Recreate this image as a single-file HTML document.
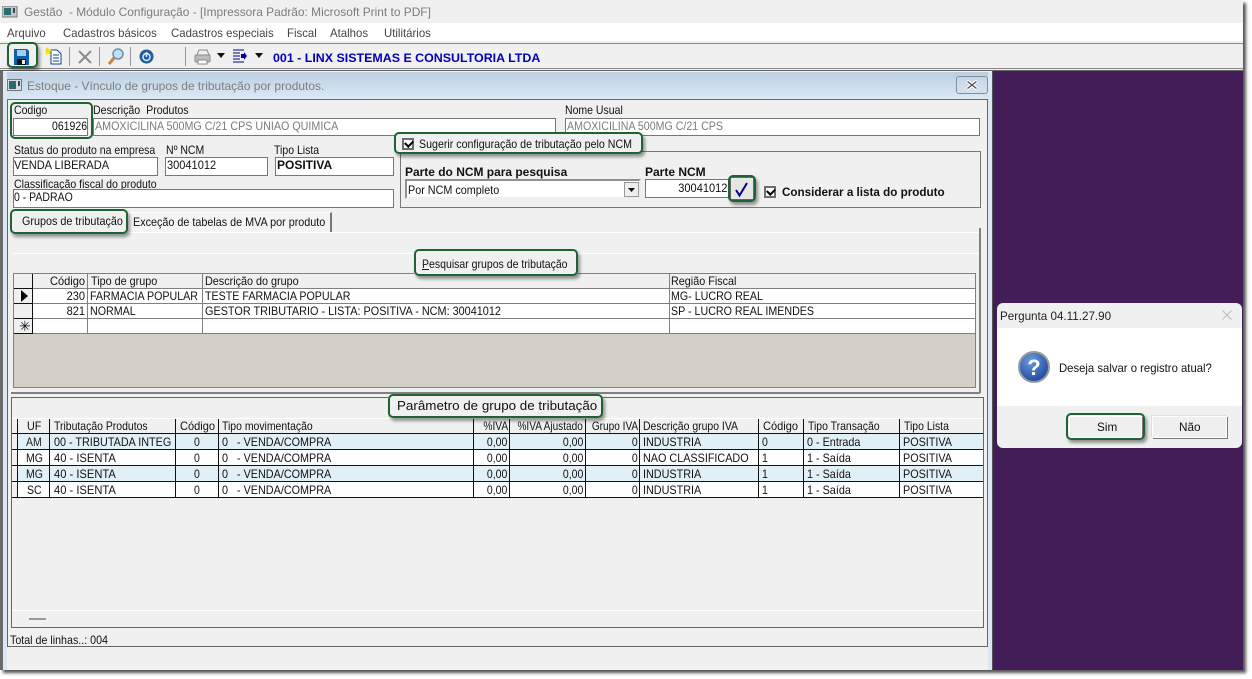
<!DOCTYPE html>
<html><head><meta charset="utf-8"><style>
html,body{margin:0;padding:0;width:1252px;height:679px;overflow:hidden;background:#fff}
*{box-sizing:border-box}
#a{position:absolute;left:0;top:0;width:1252px;height:679px;font:12px/14px "Liberation Sans",sans-serif;color:#111;overflow:hidden}
.b{position:absolute}
.t{position:absolute;white-space:pre;transform-origin:0 50%;transform:scaleX(.875);height:14px}
.r{position:absolute;white-space:pre;transform-origin:100% 50%;transform:scaleX(.875);height:14px;text-align:right}
.f{position:absolute;background:#fff;border:1px solid #777}
.g{position:absolute;border:2px solid #1d6333;border-radius:5px;box-shadow:2px 3px 3px rgba(0,0,0,.4)}
.s{position:absolute;width:1px;background:#999}
.h{position:absolute;background:#808080}
.k{position:absolute;background:#111}
.d{color:#7c7c7c}
.c{position:absolute;width:12px;height:12px;background:#fff;border:2px solid #6d6d6d}
.c:after{content:"";position:absolute;left:1px;top:0;width:6px;height:4px;border-left:2px solid #000;border-bottom:2px solid #000;transform:rotate(-45deg) translate(0,0)}
</style></head><body><div id="a">
<div class="b" style="left:0;top:0;width:1243px;height:670px;background:#f0f0f0;box-shadow:3px 3px 3px #555"></div>
<div class="b" style="left:0;top:23px;width:1243px;height:18px;background:#fff"></div>
<div class="b" style="left:0;top:43px;width:1243px;height:1px;background:#8a8a8a"></div>
<div class="b" style="left:0;top:68px;width:1243px;height:1px;background:#8a8a8a"></div>
<div class="b" style="left:0;top:70px;width:1243px;height:1px;background:#666"></div>
<div class="b" style="left:993px;top:71px;width:250px;height:599px;background:#421d58"></div>
<div class="b" style="left:0;top:71px;width:3px;height:599px;background:#6a6a6a"></div>

<svg class="b" style="left:2px;top:6px" width="16" height="12"><rect width="15" height="11" fill="#bcc6cc" stroke="#777"/><rect x="2" y="2" width="7" height="7" fill="#2d6a72"/><rect x="11" y="2" width="2" height="5" fill="#445"/></svg>
<span class="t d" style="left:24px;top:5px;transform:scaleX(.992)">Gestão  - Módulo Configuração - [Impressora Padrão: Microsoft Print to PDF]</span>
<span class="t" style="left:7px;top:26px;color:#444;transform:scaleX(.95)">Arquivo</span>
<span class="t" style="left:63px;top:26px;color:#444;transform:scaleX(.95)">Cadastros básicos</span>
<span class="t" style="left:171px;top:26px;color:#444;transform:scaleX(.95)">Cadastros especiais</span>
<span class="t" style="left:287px;top:26px;color:#444;transform:scaleX(.95)">Fiscal</span>
<span class="t" style="left:330px;top:26px;color:#444;transform:scaleX(.95)">Atalhos</span>
<span class="t" style="left:384px;top:26px;color:#444;transform:scaleX(.95)">Utilitários</span>

<div class="s" style="left:7px;top:46px;height:20px"></div>
<svg class="b" style="left:14px;top:49px" width="15" height="16"><path d="M0 0H13L15 2V16H0Z" fill="#0f5ea8"/><rect x="3" y="1" width="9" height="6" fill="#9fd0ee"/><rect x="3" y="10" width="9" height="6" fill="#111"/><rect x="8" y="11" width="3" height="4" fill="#eee"/></svg>
<svg class="b" style="left:45px;top:47px" width="17" height="18"><path d="M6 3H12L16 7V17H6Z" fill="#fff" stroke="#0b3f8f"/><path d="M8 8H14M8 11H14M8 14H14" stroke="#0b3f8f"/><path d="M3 0L4 3L7 3L5 5L6 8L3 6L1 8L1 5L0 3Z" fill="#f4e000"/></svg>
<div class="s" style="left:69px;top:47px;height:19px"></div>
<svg class="b" style="left:78px;top:50px" width="14" height="14"><path d="M1 1L13 13M13 1L1 13" stroke="#8b8b8b" stroke-width="2"/></svg>
<div class="s" style="left:99px;top:47px;height:19px"></div>
<svg class="b" style="left:107px;top:48px" width="17" height="18"><circle cx="11" cy="6" r="5" fill="#bfe2f6" stroke="#6a91ad" stroke-width="1.5"/><path d="M7 10L2 16" stroke="#c9853f" stroke-width="3"/></svg>
<div class="s" style="left:130px;top:47px;height:19px"></div>
<svg class="b" style="left:139px;top:49px" width="15" height="15"><circle cx="7.5" cy="7.5" r="7" fill="#1f5f9f"/><circle cx="7.5" cy="8" r="3.5" fill="none" stroke="#dcecf8" stroke-width="1.5"/><path d="M7.5 3V8" stroke="#dcecf8" stroke-width="1.5"/></svg>
<div class="s" style="left:185px;top:47px;height:19px"></div>
<svg class="b" style="left:194px;top:49px" width="17" height="16"><path d="M5 1H13L15 6H3Z" fill="#eee" stroke="#888"/><rect x="1" y="6" width="15" height="7" rx="1" fill="#bbb" stroke="#888"/><rect x="4" y="11" width="9" height="4" fill="#fff" stroke="#888"/></svg>
<svg class="b" style="left:217px;top:53px" width="8" height="5"><path d="M0 0H8L4 5Z" fill="#111"/></svg>
<svg class="b" style="left:233px;top:49px" width="14" height="15"><path d="M0 1H11M0 4H7M0 7H7M0 10H7M0 13H11" stroke="#0000a0" stroke-width="1"/><path d="M8 5H11V3L14 7L11 11V9H8Z" fill="#0000a0"/></svg>
<svg class="b" style="left:255px;top:53px" width="8" height="5"><path d="M0 0H8L4 5Z" fill="#111"/></svg>
<span class="t" style="left:273px;top:51px;font-weight:bold;color:#0000b8;transform:scaleX(1.035)">001 - LINX SISTEMAS E CONSULTORIA LTDA</span>
<div class="g" style="left:7px;top:42px;width:31px;height:26px"></div>

<!-- inner window -->
<div class="b" style="left:3px;top:71px;width:989px;height:599px;background:#f0f0f0;border-left:1px solid #dfe9f2"></div>
<div class="b" style="left:3px;top:72px;width:989px;height:27px;background:linear-gradient(#bccfe0,#dbe9f5)"></div>
<div class="b" style="left:988px;top:72px;width:4px;height:598px;background:#dbe8f3"></div>
<div class="b" style="left:3px;top:72px;width:4px;height:598px;background:#dbe8f3"></div>
<div class="b" style="left:992px;top:71px;width:1px;height:599px;background:#555"></div>
<svg class="b" style="left:7px;top:79px" width="15" height="12"><rect x=".5" y=".5" width="14" height="11" fill="#d5dde3" stroke="#777"/><rect x="2" y="2" width="7" height="8" fill="#2d6a72"/><rect x="11" y="2" width="2" height="5" fill="#445"/></svg>
<span class="t d" style="left:27px;top:79px;transform:scaleX(.997)">Estoque - Vínculo de grupos de tributação por produtos.</span>
<div class="b" style="left:956px;top:76px;width:32px;height:18px;border:1px solid #7d8ea1;border-radius:3px;background:linear-gradient(#c5d5e4,#d5e2ee)"></div>
<svg class="b" style="left:966px;top:80px" width="12" height="10"><path d="M1 1L11 9M11 1L1 9" stroke="#fff" stroke-width="3.4"/><path d="M1.5 1.5L10.5 8.5M10.5 1.5L1.5 8.5" stroke="#555" stroke-width="1.4"/></svg>

<!-- content -->
<div class="b" style="left:7px;top:99px;width:981px;height:548px;border:1px solid #666;background:#f0f0f0"></div>
<span class="t" style="left:14px;top:103px">Codigo</span>
<div class="f" style="left:13px;top:118px;width:75px;height:18px"></div>
<span class="r" style="right:1165px;top:119px">061926</span>
<span class="t" style="left:93px;top:103px;transform:scaleX(.885)">Descrição  Produtos</span>
<div class="f" style="left:93px;top:118px;width:463px;height:18px"></div>
<span class="t d" style="left:95px;top:119px;transform:scaleX(.894)">AMOXICILINA 500MG C/21 CPS UNIAO QUIMICA</span>
<span class="t" style="left:565px;top:103px">Nome Usual</span>
<div class="f" style="left:565px;top:118px;width:415px;height:18px"></div>
<span class="t d" style="left:567px;top:119px;transform:scaleX(.886)">AMOXICILINA 500MG C/21 CPS</span>

<span class="t" style="left:14px;top:143px;transform:scaleX(.875)">Status do produto na empresa</span>
<div class="f" style="left:13px;top:157px;width:145px;height:19px"></div>
<span class="t" style="left:14px;top:158px;transform:scaleX(.92)">VENDA LIBERADA</span>
<span class="t" style="left:166px;top:143px">Nº NCM</span>
<div class="f" style="left:165px;top:157px;width:103px;height:19px"></div>
<span class="t" style="left:167px;top:158px;transform:scaleX(.92)">30041012</span>
<span class="t" style="left:274px;top:143px">Tipo Lista</span>
<div class="f" style="left:275px;top:157px;width:119px;height:19px"></div>
<span class="t" style="left:277px;top:158px;font-weight:bold;transform:scaleX(1)">POSITIVA</span>
<span class="t" style="left:14px;top:177px;transform:scaleX(.88)">Classificação fiscal do produto</span>
<div class="f" style="left:13px;top:189px;width:381px;height:19px"></div>
<span class="t" style="left:14px;top:190px;transform:scaleX(.875)">0 - PADRAO</span>

<div class="b" style="left:400px;top:151px;width:581px;height:57px;border:1px solid #777"></div>
<div class="b" style="left:396px;top:134px;width:245px;height:18px;background:#f0f0f0"></div>
<div class="c" style="left:402px;top:138px"></div>
<span class="t" style="left:419px;top:137px;transform:scaleX(.887)">Sugerir configuração de tributação pelo NCM</span>
<div class="g" style="left:394px;top:132px;width:249px;height:22px"></div>
<span class="t" style="left:405px;top:165px;font-weight:bold;transform:scaleX(.997)">Parte do NCM para pesquisa</span>
<div class="b" style="left:405px;top:179px;width:236px;height:20px;background:#fff;border:2px solid #8f8f8f;border-right-color:#eee;border-bottom-color:#eee"></div>
<span class="t" style="left:408px;top:183px;transform:scaleX(.9)">Por NCM completo</span>
<div class="b" style="left:624px;top:182px;width:15px;height:15px;background:#eee;border:1px solid #999"></div>
<svg class="b" style="left:628px;top:188px" width="7" height="4"><path d="M0 0H7L3.5 4Z" fill="#111"/></svg>
<span class="t" style="left:645px;top:165px;font-weight:bold;transform:scaleX(1)">Parte NCM</span>
<div class="f" style="left:645px;top:179px;width:84px;height:19px"></div>
<span class="r" style="right:525px;top:181px;transform:scaleX(.92)">30041012</span>
<div class="b" style="left:730px;top:177px;width:24px;height:23px;background:#e6e6e6;border:1px solid #666"></div>
<svg class="b" style="left:733px;top:180px" width="18" height="18"><path d="M3 10L6.5 15.5L14 3" fill="none" stroke="#000090" stroke-width="2"/></svg>
<div class="g" style="left:728px;top:175px;width:28px;height:27px"></div>
<div class="c" style="left:764px;top:186px"></div>
<span class="t" style="left:782px;top:185px;font-weight:bold;transform:scaleX(.972)">Considerar a lista do produto</span>

<div class="g" style="left:10px;top:102px;width:83px;height:37px;box-shadow:none"></div>

<!-- tabs -->
<div class="b" style="left:128px;top:212px;width:204px;height:20px;background:#f4f4f4;border-right:2px solid #777;border-top:1px solid #fff"></div>
<span class="t" style="left:133px;top:215px;transform:scaleX(.899)">Exceção de tabelas de MVA por produto</span>
<span class="t" style="left:22px;top:214px;transform:scaleX(.9)">Grupos de tributação</span>
<div class="b" style="left:11px;top:232px;width:969px;height:1px;background:#fff"></div>
<div class="b" style="left:979px;top:228px;width:2px;height:165px;background:#808080"></div>
<div class="g" style="left:10px;top:209px;width:118px;height:25px"></div>
<div class="b" style="left:13px;top:253px;width:966px;height:1px;background:#fff"></div>

<!-- grid 1 -->
<div class="b" style="left:13px;top:273px;width:963px;height:115px;background:#d4d0c8;border:1px solid #808080"></div>
<div class="b" style="left:14px;top:274px;width:961px;height:14px;background:#f0f0f0"></div>
<div class="b" style="left:33px;top:288px;width:942px;height:45px;background:#fff"></div>
<div class="b" style="left:14px;top:288px;width:19px;height:45px;background:#f0f0f0"></div>
<div class="h" style="left:13px;top:288px;width:963px;height:1px"></div>
<div class="h" style="left:13px;top:303px;width:963px;height:1px"></div>
<div class="h" style="left:13px;top:318px;width:963px;height:1px"></div>
<div class="h" style="left:13px;top:333px;width:963px;height:1px"></div>
<div class="k" style="left:32px;top:274px;width:1px;height:59px"></div>
<div class="k" style="left:14px;top:303px;width:19px;height:1px"></div>
<div class="k" style="left:14px;top:318px;width:19px;height:1px"></div>
<div class="k" style="left:14px;top:333px;width:19px;height:1px"></div>
<div class="k" style="left:14px;top:288px;width:19px;height:1px"></div>
<div class="h" style="left:87px;top:274px;width:1px;height:59px"></div>
<div class="h" style="left:202px;top:274px;width:1px;height:59px"></div>
<div class="h" style="left:669px;top:274px;width:1px;height:59px"></div>
<svg class="b" style="left:21px;top:290px" width="7" height="12"><path d="M0 0L7 6L0 12Z" fill="#000"/></svg>
<span class="t" style="left:19px;top:319px;font-size:14px;transform:none">✳</span>
<span class="r" style="right:1167px;top:274px;transform:scaleX(.92)">Código</span>
<span class="t" style="left:91px;top:274px;transform:scaleX(.9)">Tipo de grupo</span>
<span class="t" style="left:205px;top:274px;transform:scaleX(.9)">Descrição do grupo</span>
<span class="t" style="left:671px;top:274px;transform:scaleX(.9)">Região Fiscal</span>
<span class="r" style="right:1167px;top:289px;transform:scaleX(.92)">230</span>
<span class="t" style="left:90px;top:289px;transform:scaleX(.89)">FARMACIA POPULAR</span>
<span class="t" style="left:205px;top:289px;transform:scaleX(.89)">TESTE FARMACIA POPULAR</span>
<span class="t" style="left:671px;top:289px;transform:scaleX(.89)">MG- LUCRO REAL</span>
<span class="r" style="right:1167px;top:304px;transform:scaleX(.92)">821</span>
<span class="t" style="left:90px;top:304px;transform:scaleX(.89)">NORMAL</span>
<span class="t" style="left:205px;top:304px;transform:scaleX(.905)">GESTOR TRIBUTARIO - LISTA: POSITIVA - NCM: 30041012</span>
<span class="t" style="left:671px;top:304px;transform:scaleX(.89)">SP - LUCRO REAL IMENDES</span>
<div class="b" style="left:414px;top:249px;width:164px;height:27px;background:#f0f0f0"></div>
<span class="t" style="left:422px;top:257px;transform:scaleX(.876)"><u>P</u>esquisar grupos de tributação</span>
<div class="g" style="left:414px;top:249px;width:164px;height:27px"></div>

<div class="b" style="left:11px;top:392px;width:969px;height:2px;background:#808080"></div>

<!-- grid 2 -->
<div class="b" style="left:11px;top:397px;width:973px;height:231px;border:1px solid #666"></div>
<div class="b" style="left:12px;top:418px;width:971px;height:1px;background:#fff"></div>
<div class="b" style="left:17px;top:433px;width:966px;height:64px;background:#fff"></div>
<div class="b" style="left:17px;top:433px;width:966px;height:16px;background:#e1eff7"></div>
<div class="b" style="left:17px;top:465px;width:966px;height:16px;background:#e1eff7"></div>
<div class="k" style="left:12px;top:433px;width:971px;height:1px"></div>
<div class="k" style="left:12px;top:449px;width:971px;height:1px"></div>
<div class="k" style="left:12px;top:465px;width:971px;height:1px"></div>
<div class="k" style="left:12px;top:481px;width:971px;height:1px"></div>
<div class="k" style="left:12px;top:497px;width:971px;height:1px"></div>
<div class="k" style="left:17px;top:419px;width:1px;height:79px"></div>
<div class="k" style="left:49px;top:419px;width:1px;height:79px"></div>
<div class="k" style="left:175px;top:419px;width:1px;height:79px"></div>
<div class="k" style="left:218px;top:419px;width:1px;height:79px"></div>
<div class="k" style="left:473px;top:419px;width:1px;height:79px"></div>
<div class="k" style="left:509px;top:419px;width:1px;height:79px"></div>
<div class="k" style="left:585px;top:419px;width:1px;height:79px"></div>
<div class="k" style="left:639px;top:419px;width:1px;height:79px"></div>
<div class="k" style="left:758px;top:419px;width:1px;height:79px"></div>
<div class="k" style="left:803px;top:419px;width:1px;height:79px"></div>
<div class="k" style="left:899px;top:419px;width:1px;height:79px"></div>
<span class="t" style="left:27px;top:419px;transform:scaleX(.9)">UF</span>
<span class="t" style="left:54px;top:419px;transform:scaleX(.87)">Tributação Produtos</span>
<span class="t" style="left:180px;top:419px;transform:scaleX(.92)">Código</span>
<span class="t" style="left:222px;top:419px;transform:scaleX(.87)">Tipo movimentação</span>
<span class="r" style="right:744px;top:419px;transform:scaleX(.85)">%IVA</span>
<span class="r" style="right:669px;top:419px;transform:scaleX(.84)">%IVA Ajustado</span>
<span class="r" style="right:614px;top:419px;transform:scaleX(.84)">Grupo IVA</span>
<span class="t" style="left:643px;top:419px;transform:scaleX(.87)">Descrição grupo IVA</span>
<span class="t" style="left:763px;top:419px;transform:scaleX(.92)">Código</span>
<span class="t" style="left:808px;top:419px;transform:scaleX(.87)">Tipo Transação</span>
<span class="t" style="left:904px;top:419px;transform:scaleX(.87)">Tipo Lista</span>

<span class="t" style="left:26px;top:435px;color:#222">AM</span><span class="t" style="left:54px;top:435px;transform:scaleX(.9)">00 - TRIBUTADA INTEG</span><span class="t" style="left:194px;top:435px">0</span><span class="t" style="left:222px;top:435px;transform:scaleX(.9)">0   - VENDA/COMPRA</span><span class="r" style="right:745px;top:435px">0,00</span><span class="r" style="right:669px;top:435px">0,00</span><span class="r" style="right:614px;top:435px">0</span><span class="t" style="left:643px;top:435px;transform:scaleX(.9)">INDUSTRIA</span><span class="t" style="left:762px;top:435px">0</span><span class="t" style="left:807px;top:435px;transform:scaleX(.9)">0 - Entrada</span><span class="t" style="left:903px;top:435px;transform:scaleX(.9)">POSITIVA</span>
<span class="t" style="left:26px;top:451px">MG</span><span class="t" style="left:54px;top:451px;transform:scaleX(.93)">40 - ISENTA</span><span class="t" style="left:194px;top:451px">0</span><span class="t" style="left:222px;top:451px;transform:scaleX(.9)">0   - VENDA/COMPRA</span><span class="r" style="right:745px;top:451px">0,00</span><span class="r" style="right:669px;top:451px">0,00</span><span class="r" style="right:614px;top:451px">0</span><span class="t" style="left:643px;top:451px;transform:scaleX(.9)">NAO CLASSIFICADO</span><span class="t" style="left:762px;top:451px">1</span><span class="t" style="left:807px;top:451px;transform:scaleX(.9)">1 - Saída</span><span class="t" style="left:903px;top:451px;transform:scaleX(.9)">POSITIVA</span>
<span class="t" style="left:26px;top:467px">MG</span><span class="t" style="left:54px;top:467px;transform:scaleX(.93)">40 - ISENTA</span><span class="t" style="left:194px;top:467px">0</span><span class="t" style="left:222px;top:467px;transform:scaleX(.9)">0   - VENDA/COMPRA</span><span class="r" style="right:745px;top:467px">0,00</span><span class="r" style="right:669px;top:467px">0,00</span><span class="r" style="right:614px;top:467px">0</span><span class="t" style="left:643px;top:467px;transform:scaleX(.9)">INDUSTRIA</span><span class="t" style="left:762px;top:467px">1</span><span class="t" style="left:807px;top:467px;transform:scaleX(.9)">1 - Saída</span><span class="t" style="left:903px;top:467px;transform:scaleX(.9)">POSITIVA</span>
<span class="t" style="left:27px;top:483px">SC</span><span class="t" style="left:54px;top:483px;transform:scaleX(.93)">40 - ISENTA</span><span class="t" style="left:194px;top:483px">0</span><span class="t" style="left:222px;top:483px;transform:scaleX(.9)">0   - VENDA/COMPRA</span><span class="r" style="right:745px;top:483px">0,00</span><span class="r" style="right:669px;top:483px">0,00</span><span class="r" style="right:614px;top:483px">0</span><span class="t" style="left:643px;top:483px;transform:scaleX(.9)">INDUSTRIA</span><span class="t" style="left:762px;top:483px">1</span><span class="t" style="left:807px;top:483px;transform:scaleX(.9)">1 - Saída</span><span class="t" style="left:903px;top:483px;transform:scaleX(.9)">POSITIVA</span>

<div class="b" style="left:388px;top:394px;width:215px;height:24px;background:#f0f0f0"></div>
<span class="t" style="left:397px;top:399px;font-size:13px;transform:scaleX(1.03)">Parâmetro de grupo de tributação</span>
<div class="g" style="left:388px;top:394px;width:215px;height:24px"></div>

<div class="b" style="left:12px;top:610px;width:971px;height:1px;background:#fff"></div>
<div class="b" style="left:29px;top:618px;width:17px;height:2px;background:#999"></div>
<span class="t" style="left:10px;top:633px;transform:scaleX(.89)">Total de linhas..: 004</span>

<!-- dialog -->
<div class="b" style="left:997px;top:303px;width:245px;height:145px;background:#f0f0f0;border-radius:6px;overflow:hidden;box-shadow:0 0 1px #333">
<div class="b" style="left:0;top:25px;width:245px;height:78px;background:#fff"></div>
</div>
<span class="t" style="left:1000px;top:309px;color:#222;transform:scaleX(.97)">Pergunta 04.11.27.90</span>
<svg class="b" style="left:1222px;top:310px" width="10" height="10"><path d="M.5 .5L9.5 9.5M9.5 .5L.5 9.5" stroke="#bbb" stroke-width="1"/></svg>
<svg class="b" style="left:1018px;top:351px" width="32" height="32"><defs><radialGradient id="q" cx=".4" cy=".3" r=".8"><stop offset="0" stop-color="#6c9be0"/><stop offset="1" stop-color="#123f96"/></radialGradient></defs><circle cx="16" cy="16" r="15" fill="url(#q)" stroke="#9a9a9a" stroke-width="2"/><text x="16" y="24" text-anchor="middle" font-family="Liberation Sans" font-weight="bold" font-size="22" fill="#fff">?</text></svg>
<span class="t" style="left:1059px;top:361px;transform:scaleX(.943)">Deseja salvar o registro atual?</span>
<div class="b" style="left:1069px;top:416px;width:73px;height:22px;background:#efefef;border:1px solid #fff;box-shadow:1px 1px 0 #777"></div>
<span class="t" style="left:1097px;top:420px;transform:scaleX(.98)">Sim</span>
<div class="g" style="left:1066px;top:413px;width:79px;height:27px"></div>
<div class="b" style="left:1152px;top:416px;width:75px;height:22px;background:#efefef;border:1px solid #fff;box-shadow:1px 1px 0 #777,-1px -1px 0 #ddd"></div>
<span class="t" style="left:1179px;top:420px;transform:scaleX(.98)">Não</span>
</div></body></html>
